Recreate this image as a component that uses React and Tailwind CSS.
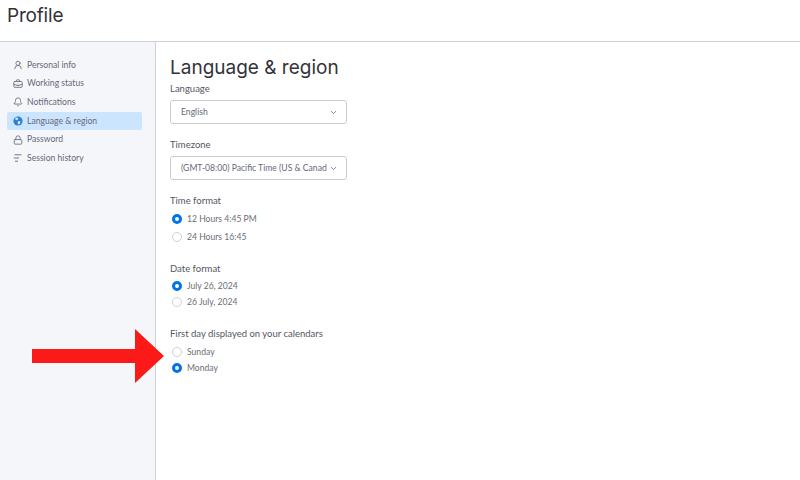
import React from "react";
import { ChevronDown, UserRound, BriefcaseBusiness, Bell, Lock } from "lucide-react";

const NavItem = ({ icon, label, active }) => (
  <div
    className={`flex h-[18.6px] w-[135px] items-center gap-[4px] rounded-[2px] pl-[6px] text-[8.6px] text-[#676879] ${
      active ? "bg-[#cce5ff]" : ""
    }`}
  >
    <span className="flex w-[10px] justify-center">{icon}</span>
    <span>{label}</span>
  </div>
);

const GlobeIcon = () => (
  <svg width="10" height="10" viewBox="0 0 10 10">
    <circle cx="5" cy="5" r="4.6" fill="#2b7fd6" />
    <path d="M3 1.2 L5.4 2.2 L5 3.6 L3.2 4.2 L2 3 Z" fill="#cce5ff" />
    <path d="M5.2 5 L7.6 5.6 L6.8 8 L5.2 8.6 L4.6 6.4 Z" fill="#cce5ff" />
  </svg>
);

const HistoryIcon = () => (
  <svg width="10" height="10" viewBox="0 0 10 10" fill="none" stroke="#676879" strokeWidth="0.9">
    <path d="M1.5 1.8 H8.5" />
    <path d="M0.8 5 H6" />
    <path d="M2 8.2 H5" />
  </svg>
);

const Select = ({ value }) => (
  <div className="flex h-[24px] w-[177px] items-center justify-between rounded-[3px] border border-[#c9ccd6] pl-[10px] pr-[8px] text-[8.6px] text-[#676879]">
    <span className="whitespace-nowrap">{value}</span>
    <ChevronDown size={9} className="shrink-0 text-[#5f6168]" />
  </div>
);

const Radio = ({ label, checked, className = "" }) => (
  <div className={`flex items-center gap-[5px] text-[8.6px] text-[#6b6d75] ${className}`}>
    {checked ? (
      <span className="h-[10px] w-[10px] rounded-full border-[3px] border-[#0073ea] bg-white" />
    ) : (
      <span className="h-[10px] w-[10px] rounded-full border border-[#cfd1da] bg-white" />
    )}
    <span>{label}</span>
  </div>
);

const FieldLabel = ({ children, className = "" }) => (
  <div className={`text-[9.5px] leading-[12px] text-[#55565f] ${className}`}>{children}</div>
);

const App = () => {
  return (
    <div className="relative flex h-[480px] w-[800px] flex-col overflow-hidden bg-white font-['Lato',sans-serif]">
      {/* header */}
      <div className="flex h-[42px] shrink-0 items-start border-b border-[#cfd1da] pl-[7px] pt-[2px]">
        <h1 className="font-['Inter',sans-serif] text-[19px] leading-[28px] tracking-[-0.2px] text-[#323338]">Profile</h1>
      </div>

      <div className="flex flex-1">
        {/* sidebar */}
        <div className="flex w-[156px] shrink-0 flex-col border-r border-[#cfd1da] bg-[#f5f6fa] pl-[7px] pt-[14px]">
          <NavItem icon={<UserRound size={10} />} label="Personal info" />
          <NavItem icon={<BriefcaseBusiness size={10} />} label="Working status" />
          <NavItem icon={<Bell size={10} />} label="Notifications" />
          <NavItem icon={<GlobeIcon />} label="Language & region" active />
          <NavItem icon={<Lock size={10} />} label="Password" />
          <NavItem icon={<HistoryIcon />} label="Session history" />
        </div>

        {/* content */}
        <div className="flex flex-col pl-[14px] pt-[14px]">
          <h2 className="font-['Inter',sans-serif] text-[19px] leading-[24px] text-[#323338]">Language &amp; region</h2>
          <FieldLabel className="mt-[3px]">Language</FieldLabel>
          <div className="mt-[5px]">
            <Select value="English" />
          </div>
          <FieldLabel className="mt-[15px]">Timezone</FieldLabel>
          <div className="mt-[5px]">
            <Select value="(GMT-08:00) Pacific Time (US & Canad" />
          </div>

          <FieldLabel className="mt-[15px]">Time format</FieldLabel>
          <Radio className="mt-[3px] h-[18px] pl-[2px]" label="12 Hours 4:45 PM" checked />
          <Radio className="h-[18px] pl-[2px]" label="24 Hours 16:45" />

          <FieldLabel className="mt-[17px]">Date format</FieldLabel>
          <Radio className="mt-[3px] h-[16px] pl-[2px]" label="July 26, 2024" checked />
          <Radio className="h-[16px] pl-[2px]" label="26 July, 2024" />

          <FieldLabel className="mt-[18px]">First day displayed on your calendars</FieldLabel>
          <Radio className="mt-[4px] h-[16px] pl-[2px]" label="Sunday" />
          <Radio className="h-[16px] pl-[2px]" label="Monday" checked />
        </div>
      </div>

      {/* red annotation arrow */}
      <svg className="absolute left-[32px] top-[329px]" width="132" height="55" viewBox="0 0 132 55">
        <path d="M0 20 H103 V0 L132 27 L103 54 V34 H0 Z" fill="#fb1a17" />
      </svg>
    </div>
  );
};

export default App;
